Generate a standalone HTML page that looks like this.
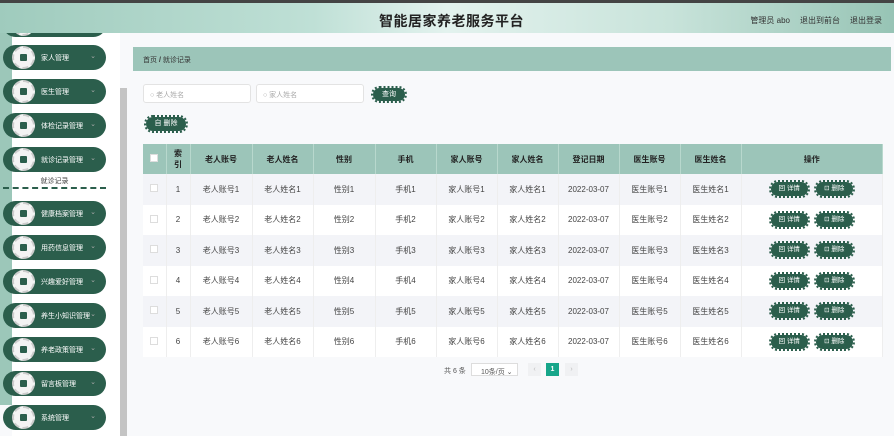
<!DOCTYPE html>
<html><head><meta charset="utf-8"><style>
*{margin:0;padding:0;box-sizing:border-box}
body{width:894px;height:436px;overflow:hidden;background:#f8f9fb;font-family:"Liberation Sans","Noto Sans CJK SC",sans-serif;position:relative;font-size:8px;color:#555}
.top{position:absolute;left:0;top:0;width:894px;height:3px;background:#444;z-index:3}
.hdr{position:absolute;left:0;top:3px;width:894px;height:30px;z-index:2;background:linear-gradient(90deg,#9fcbbd 0%,#bfe0d6 35%,#e3f2ee 50%,#c8e3da 75%,#97c4b5 100%)}
.hdr h1{position:absolute;left:379px;top:8px;font-size:14px;color:#222;font-weight:bold;letter-spacing:.5px}
.hdr .r{position:absolute;right:12px;top:12px;font-size:8px;color:#333}
.hdr .r span{margin-left:10px}
.strip{position:absolute;left:0;top:33px;width:12px;height:372px;background:#9cc7b9}
.side{position:absolute;left:12px;top:33px;width:108px;height:403px;background:#fff}
.sb{position:absolute;left:120px;top:88px;width:7px;height:348px;background:#c4c4c4}
.pill{position:absolute;left:3px;width:103px;height:25px;border-radius:13px;background:#2b5e4c;color:#fff;font-size:7px}
.pill .ic{position:absolute;left:9px;top:1px;width:23px;height:23px;border-radius:50%;background:#f3f3f3;border:2px dashed #ccc}
.pill .ic i{position:absolute;left:6px;top:6px;width:7px;height:7px;background:#2b5e4c;border-radius:1px}
.pill .t{position:absolute;left:38px;top:8px}
.pill .a{position:absolute;right:10px;top:7px;font-size:7px;color:#aaa}
.sub{position:absolute;left:3px;top:172px;width:103px;height:17px;text-align:center;font-size:7px;color:#444;padding-top:4px;border-bottom:2px dashed #2b5e4c}
.bc{position:absolute;left:133px;top:47px;width:758px;height:24px;background:#9cc5b9;font-size:7px;color:#333;padding:8px 10px}
.inp{position:absolute;top:84px;height:19px;width:108px;background:#fff;border:1px solid #e3e3e3;border-radius:3px;font-size:7px;color:#aaa;padding:5px 6px}
.btn{position:absolute;background:#2b5e4c;color:#fff;font-size:7px;text-align:center;border-radius:8px;outline:2px dotted #2b5e4c}
table{position:absolute;left:143px;top:144px;width:740px;border-collapse:collapse;font-size:8px;background:#fff}
th{background:#9cc5b9;color:#222;height:30px;font-weight:bold;border-right:1px solid #b8d8cd}
td{height:30.5px;text-align:center;color:#444;border-right:1px solid #eee}
tr:nth-child(even) td{background:#f3f4f8}
.cb{display:inline-block;width:8px;height:8px;border:1px solid #ddd;background:#fff}
.ob{display:inline-block;width:37px;height:14px;line-height:14px;background:#2b5e4c;color:#fff;font-size:6.5px;border-radius:7px;outline:2px dotted #2b5e4c;margin:0 4px}
.pg{position:absolute;top:364px;font-size:7px;color:#555}
</style></head><body>
<div class="top"></div>
<div class="hdr"><h1>智能居家养老服务平台</h1><div class="r">管理员 abo<span>退出到前台</span><span>退出登录</span></div></div>
<div class="strip"></div><div class="side"></div><div class="sb"></div>
<div class="pill" style="top:12px"><div class="ic"><i></i></div></div>
<div class="pill" style="top:45px"><div class="ic"><i></i></div><span class="t">家人管理</span><span class="a">⌄</span></div>
<div class="pill" style="top:79px"><div class="ic"><i></i></div><span class="t">医生管理</span><span class="a">⌄</span></div>
<div class="pill" style="top:113px"><div class="ic"><i></i></div><span class="t">体检记录管理</span><span class="a">⌄</span></div>
<div class="pill" style="top:147px"><div class="ic"><i></i></div><span class="t">就诊记录管理</span><span class="a">⌄</span></div>
<div class="sub">就诊记录</div>
<div class="pill" style="top:201px"><div class="ic"><i></i></div><span class="t">健康档案管理</span><span class="a">⌄</span></div>
<div class="pill" style="top:235px"><div class="ic"><i></i></div><span class="t">用药信息管理</span><span class="a">⌄</span></div>
<div class="pill" style="top:269px"><div class="ic"><i></i></div><span class="t">兴趣爱好管理</span><span class="a">⌄</span></div>
<div class="pill" style="top:303px"><div class="ic"><i></i></div><span class="t">养生小知识管理</span><span class="a">⌄</span></div>
<div class="pill" style="top:337px"><div class="ic"><i></i></div><span class="t">养老政策管理</span><span class="a">⌄</span></div>
<div class="pill" style="top:371px"><div class="ic"><i></i></div><span class="t">留言板管理</span><span class="a">⌄</span></div>
<div class="pill" style="top:405px"><div class="ic"><i></i></div><span class="t">系统管理</span><span class="a">⌄</span></div>
<div class="bc">首页 <b>/</b> 就诊记录</div>
<div class="inp" style="left:143px">○ 老人姓名</div>
<div class="inp" style="left:256px">○ 家人姓名</div>
<div class="btn" style="left:373px;top:88px;width:32px;height:13px;line-height:13px">查询</div>
<div class="btn" style="left:146px;top:117px;width:40px;height:14px;line-height:14px">自 删除</div>
<table>
<tr><th style="width:23px"><span class="cb"></span></th><th style="width:24px">索<br>引</th><th style="width:62px">老人账号</th><th style="width:61px">老人姓名</th><th style="width:62px">性别</th><th style="width:61px">手机</th><th style="width:61px">家人账号</th><th style="width:61px">家人姓名</th><th style="width:61px">登记日期</th><th style="width:61px">医生账号</th><th style="width:61px">医生姓名</th><th>操作</th></tr>
<tr><td><span class="cb"></span></td><td>1</td><td>老人账号1</td><td>老人姓名1</td><td>性别1</td><td>手机1</td><td>家人账号1</td><td>家人姓名1</td><td>2022-03-07</td><td>医生账号1</td><td>医生姓名1</td><td><span class="ob">回 详情</span><span class="ob">⊡ 删除</span></td></tr>
<tr><td><span class="cb"></span></td><td>2</td><td>老人账号2</td><td>老人姓名2</td><td>性别2</td><td>手机2</td><td>家人账号2</td><td>家人姓名2</td><td>2022-03-07</td><td>医生账号2</td><td>医生姓名2</td><td><span class="ob">回 详情</span><span class="ob">⊡ 删除</span></td></tr>
<tr><td><span class="cb"></span></td><td>3</td><td>老人账号3</td><td>老人姓名3</td><td>性别3</td><td>手机3</td><td>家人账号3</td><td>家人姓名3</td><td>2022-03-07</td><td>医生账号3</td><td>医生姓名3</td><td><span class="ob">回 详情</span><span class="ob">⊡ 删除</span></td></tr>
<tr><td><span class="cb"></span></td><td>4</td><td>老人账号4</td><td>老人姓名4</td><td>性别4</td><td>手机4</td><td>家人账号4</td><td>家人姓名4</td><td>2022-03-07</td><td>医生账号4</td><td>医生姓名4</td><td><span class="ob">回 详情</span><span class="ob">⊡ 删除</span></td></tr>
<tr><td><span class="cb"></span></td><td>5</td><td>老人账号5</td><td>老人姓名5</td><td>性别5</td><td>手机5</td><td>家人账号5</td><td>家人姓名5</td><td>2022-03-07</td><td>医生账号5</td><td>医生姓名5</td><td><span class="ob">回 详情</span><span class="ob">⊡ 删除</span></td></tr>
<tr><td><span class="cb"></span></td><td>6</td><td>老人账号6</td><td>老人姓名6</td><td>性别6</td><td>手机6</td><td>家人账号6</td><td>家人姓名6</td><td>2022-03-07</td><td>医生账号6</td><td>医生姓名6</td><td><span class="ob">回 详情</span><span class="ob">⊡ 删除</span></td></tr>
</table>
<div class="pg" style="left:444px;top:366px">共 6 条</div>
<div class="pg" style="left:471px;top:363px;width:47px;height:13px;border:1px solid #ddd;background:#fff;padding:3px 0 0 9px">10条/页 ⌄</div>
<div class="pg" style="left:528px;top:363px;width:13px;height:13px;background:#f0f1f3;text-align:center;line-height:13px;color:#bbb">‹</div>
<div class="pg" style="left:546px;top:363px;width:13px;height:13px;background:#17a68a;color:#fff;text-align:center;line-height:13px;font-weight:bold">1</div>
<div class="pg" style="left:565px;top:363px;width:13px;height:13px;background:#f0f1f3;text-align:center;line-height:13px;color:#bbb">›</div>
</body></html>
